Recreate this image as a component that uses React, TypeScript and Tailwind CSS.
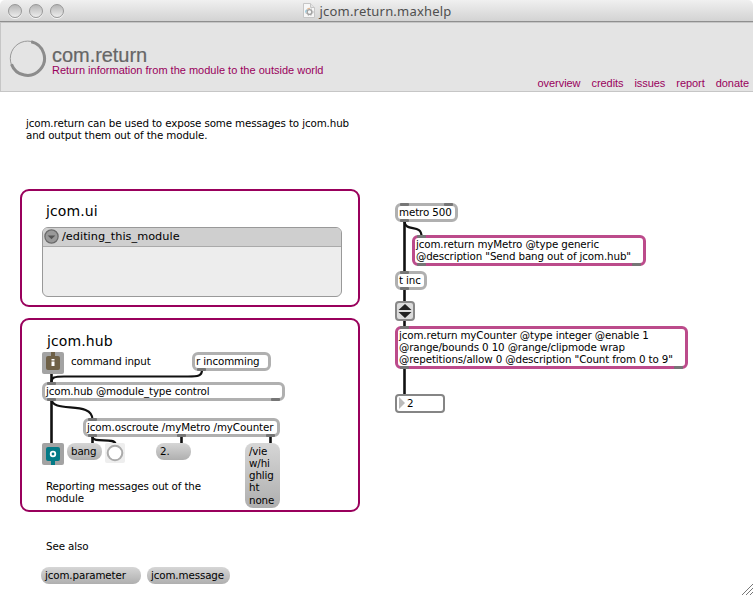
import type { ReactNode } from "react";

function Nub({ className }: { className: string }) {
  return <span className={`absolute h-[3px] w-[9px] rounded-[1px] bg-[#767676] ${className}`} />;
}

function ObjectBox({
  className,
  tone = "border-[#b0b0b0]",
  nubs,
  children,
}: {
  className: string;
  tone?: string;
  nubs: string[];
  children: ReactNode;
}) {
  return (
    <div className={`absolute whitespace-pre rounded-[6px] border-[3px] bg-white pl-px ${tone} ${className}`}>
      {children}
      {nubs.map((n) => (
        <Nub key={n} className={n} />
      ))}
    </div>
  );
}

function Message({ className, children }: { className: string; children: ReactNode }) {
  return (
    <div
      className={`whitespace-pre rounded-[8px] bg-linear-to-b from-[#d6d6d6] to-[#afafaf] pl-1 pt-[2px] ${className}`}
    >
      {children}
    </div>
  );
}

function TrafficLight() {
  return (
    <span className="size-[14px] rounded-full border border-[#989898] bg-linear-to-b from-[#b5b5b5] via-[#d2d2d2] to-[#ededed] shadow-[0_1px_0_#f5f5f5]" />
  );
}

function TitleBar() {
  return (
    <header className="flex h-[22px] shrink-0 items-center rounded-t-[5px] border-b border-[#8f8f8f] bg-linear-to-b from-[#f0f0f0] to-[#d3d3d3]">
      <div className="flex flex-1 gap-[7px] pl-2">
        <TrafficLight />
        <TrafficLight />
        <TrafficLight />
      </div>
      <div className="flex items-center gap-[5px] pr-[7px]">
        <svg width="12" height="15" viewBox="0 0 12 15">
          <path d="M.5.5h7l4 4v10H.5z" fill="#f7f7f7" stroke="#c6c6c6" />
          <path d="M7.5.5v4h4" fill="#e4e4e4" stroke="#c6c6c6" />
          <circle cx="6.5" cy="9" r="2.4" fill="none" stroke="#a2a2a2" strokeWidth="1.4" />
          <circle cx="6.5" cy="9" r="3.5" fill="none" stroke="#b4b4b4" strokeWidth="1" strokeDasharray="1.4 1.5" />
          <path d="M2.7 9.5a4 4 0 0 1 1-3" fill="none" stroke="#83c4dd" />
          <path d="M4 6.3a4 4 0 0 1 3-1" fill="none" stroke="#e9b78c" />
        </svg>
        <span className="font-['Noto_Sans',sans-serif] text-[13px] leading-5 tracking-[0.2px] text-[#4f4f4f]">
          jcom.return.maxhelp
        </span>
      </div>
      <div className="flex-1" />
    </header>
  );
}

function Banner() {
  return (
    <section className="flex h-[70px] shrink-0 justify-between border border-r-0 border-[#c6c6c6] bg-[#e4e4e4] font-['Liberation_Sans',Arial,sans-serif]">
      <div className="flex pl-[8px] pt-[16px]">
        <svg width="38" height="40" viewBox="0 0 38 40">
          <circle cx="18.7" cy="19.5" r="17.4" fill="none" stroke="#999" strokeWidth="1" />
          <path d="M22.2 2.8A17 17 0 1 1 2.5 25.2" fill="none" stroke="#8c8c8c" strokeWidth="3" />
        </svg>
        <div className="pl-[5px] pt-[5px]">
          <h1 className="text-[20px] leading-[22px] tracking-[-0.05px] text-[#666] [-webkit-text-stroke:0.2px_#666]">com.return</h1>
          <p className="-mt-[2px] text-[11px] leading-[12px] text-[#99005c]">
            Return information from the module to the outside world
          </p>
        </div>
      </div>
      <nav className="flex items-end gap-[11px] pb-[1px] pr-[4px] text-[11px] leading-[14px] tracking-[-0.06px] text-[#99005c]">
        <a>overview</a>
        <a>credits</a>
        <a>issues</a>
        <a>report</a>
        <a>donate</a>
      </nav>
    </section>
  );
}

function UiPanel() {
  return (
    <section className="mt-12 h-[118px] shrink-0 rounded-[9px] border-2 border-[#99005c] pl-5 pt-[11px]">
      <h2 className="pl-1 text-[14px] leading-[18px] tracking-[0.1px]">jcom.ui</h2>
      <div className="mt-[7px] h-[70px] w-[300px] overflow-hidden rounded-[6px] border border-[#999] bg-[#ededed]">
        <div className="flex h-[19px] items-start gap-[3px] border-b border-[#aaa] bg-[#cfcfcf] pl-[1px] pt-px text-[11.3px] leading-[16px] tracking-[0.02px]">
          <svg width="15" height="15" viewBox="0 0 15 15">
            <circle cx="7.5" cy="7.5" r="6.6" fill="#999" stroke="#6b6b6b" strokeWidth="1.3" />
            <path d="M3.7 6.5h7.6L7.5 10.2z" fill="#555" />
          </svg>
          <span>/editing_this_module</span>
        </div>
      </div>
    </section>
  );
}

function HubPanel() {
  return (
    <section className="relative mt-[11px] h-[194px] shrink-0 rounded-[9px] border-2 border-[#99005c] pl-[25px] pt-[12px]">
      <h2 className="text-[14px] leading-[18px] tracking-[0.1px]">jcom.hub</h2>

      {/* Patch cords, in window coordinates. */}
      <svg className="absolute inset-0" width="336" height="190" viewBox="22 320 336 190" fill="none" stroke="#111" strokeWidth="2.6">
        <path d="M51.5 372V384" />
        <path d="M51.5 382C51.5 377.5 54 376.5 64 376.5H188C198 376.5 202 376 202 370" strokeWidth="2.2" />
        <path d="M51.5 399V445" />
        <path d="M51.5 399C52 414 93 400 92.5 420" strokeWidth="2.2" />
        <path d="M92.5 436V445" />
        <path d="M92.5 437C93 443.5 115 437 115.5 444" strokeWidth="2.2" />
        <path d="M181.5 436V444" />
        <path d="M270.5 436V444" />
      </svg>

      <svg className="absolute left-[20px] top-[32px]" width="22" height="22" viewBox="0 0 22 22">
        <rect width="22" height="22" rx="2" fill="#a3a3a3" />
        <rect x="4" y="4" width="14" height="14" rx="2" fill="#6f6147" />
        <path d="M9 0h4v5H9z" fill="#6f6147" />
        <path d="M9.5 7h3v1.5h-3zM9.5 9.5h3V14h-3z" fill="#fff" />
      </svg>
      <p className="absolute left-[49px] top-[35px]">command input</p>
      <ObjectBox className="left-[170px] top-[32px] h-[19px] w-[79px]" nubs={["left-[2px] -bottom-[3px]"]}>
        r incomming
      </ObjectBox>
      <ObjectBox
        className="left-[20px] top-[62px] h-[19px] w-[243px]"
        nubs={["left-[2px] -top-[3px]", "left-[2px] -bottom-[3px]", "right-[2px] -bottom-[3px]"]}
      >
        jcom.hub @module_type control
      </ObjectBox>
      <ObjectBox
        className="left-[61px] top-[98px] h-[19px] w-[197px] tracking-[-0.08px]"
        nubs={["left-[2px] -top-[3px]", "left-[2px] -bottom-[3px]", "left-[91px] -bottom-[3px]", "right-[2px] -bottom-[3px]"]}
      >
        jcom.oscroute /myMetro /myCounter
      </ObjectBox>

      <svg className="absolute left-[20px] top-[123px]" width="22" height="22" viewBox="0 0 22 22">
        <rect width="22" height="22" rx="2" fill="#a3a3a3" />
        <rect x="4" y="4" width="14" height="14" rx="2" fill="#047a86" />
        <path d="M9 17h4v5H9z" fill="#047a86" />
        <circle cx="11" cy="11" r="2.3" fill="none" stroke="#fff" strokeWidth="1.8" />
      </svg>
      <Message className="absolute left-[45px] top-[123px] h-[17px] w-[35px]">bang</Message>
      <svg className="absolute left-[83px] top-[123px]" width="20" height="20" viewBox="0 0 20 20">
        <rect width="20" height="20" rx="2" fill="#eee" />
        <circle cx="10" cy="10" r="7.3" fill="#fff" stroke="#ababab" strokeWidth="2" />
      </svg>
      <Message className="absolute left-[134px] top-[123px] h-[17px] w-[35px]">2.</Message>
      <Message className="absolute left-[223px] top-[123px] h-[65px] w-[35px]">
        {"/vie\nw/hi\nghlig\nht"}
        <div className="pt-px">none</div>
      </Message>
      <p className="absolute left-[24px] top-[160px] whitespace-pre">{"Reporting messages out of the\nmodule"}</p>
    </section>
  );
}

function CounterPatch() {
  return (
    <section className="relative flex-1">
      <svg className="absolute inset-0" width="393" height="503" viewBox="360 92 393 503" fill="none" stroke="#111" strokeWidth="2.6">
        <path d="M404.5 220V273" />
        <path d="M404.5 221C405 233 422 223 421.5 237" strokeWidth="2.2" />
        <path d="M404.5 288V303" />
        <path d="M404.5 320V328" />
        <path d="M404.5 367V395" />
      </svg>
      <ObjectBox
        className="left-[35px] top-[111px] h-[19px] w-[63px]"
        nubs={["left-[2px] -top-[3px]", "right-[2px] -top-[3px]", "left-[2px] -bottom-[3px]"]}
      >
        metro 500
      </ObjectBox>
      <ObjectBox
        className="left-[52px] top-[143px] h-[31px] w-[234px]"
        tone="border-[#bc4b8b]"
        nubs={["left-[2px] -top-[3px]", "left-[2px] -bottom-[3px]", "right-[2px] -bottom-[3px]"]}
      >
        {'jcom.return myMetro @type generic\n@description "Send bang out of jcom.hub"'}
      </ObjectBox>
      <ObjectBox
        className="left-[35px] top-[179px] h-[19px] w-[32px]"
        nubs={["left-[2px] -top-[3px]", "left-[2px] -bottom-[3px]"]}
      >
        t inc
      </ObjectBox>
      <svg className="absolute left-[35px] top-[209px]" width="20" height="20" viewBox="0 0 20 20">
        <rect x="1" y="1" width="18" height="18" rx="3" fill="#dcdcdc" stroke="#888" strokeWidth="2" />
        <path d="M10 3l6.5 6h-13zM10 17l6.5-6h-13z" fill="#222" />
      </svg>
      <ObjectBox
        className="left-[35px] top-[234px] h-[43px] w-[293px]"
        tone="border-[#bc4b8b]"
        nubs={["left-[2px] -top-[3px]", "left-[2px] -bottom-[3px]", "right-[2px] -bottom-[3px]"]}
      >
        {'jcom.return myCounter @type integer @enable 1\n@range/bounds 0 10 @range/clipmode wrap\n@repetitions/allow 0 @description "Count from 0 to 9"'}
      </ObjectBox>
      <div className="absolute left-[35px] top-[302px] flex h-[19px] w-[50px] items-center gap-[2px] rounded-[4px] border-2 border-[#858585] bg-white pb-px pl-[2px]">
        <svg width="6" height="12" viewBox="0 0 6 12">
          <path d="M0 0l6 6-6 6z" fill="#bbb" />
        </svg>
        2
      </div>
      <svg className="absolute bottom-0 right-0" width="12" height="12" viewBox="0 0 12 12" stroke="#777" strokeWidth="1">
        <path d="M1 12L12 1M5 12l7-7M9 12l3-3" />
      </svg>
    </section>
  );
}

export default function App() {
  return (
    <div className="flex h-[595px] w-[753px] flex-col overflow-hidden bg-white">
      <TitleBar />
      <Banner />
      <main className="flex flex-1 overflow-hidden bg-white font-['DejaVu_Sans',Verdana,sans-serif] text-[10.3px] leading-[12px] tracking-[-0.12px] text-black">
        <div className="flex w-[360px] shrink-0 flex-col pl-5 pt-[25px]">
          <p className="whitespace-pre pl-[6px]">
            {"jcom.return can be used to expose some messages to jcom.hub\nand output them out of the module."}
          </p>
          <UiPanel />
          <HubPanel />
          <h3 className="mt-7 pl-[26px]">See also</h3>
          <div className="mt-[15px] flex gap-[6px] pl-[21px]">
            <Message className="h-[17px] w-[100px]">jcom.parameter</Message>
            <Message className="h-[17px] w-[83px]">jcom.message</Message>
          </div>
        </div>
        <CounterPatch />
      </main>
    </div>
  );
}
